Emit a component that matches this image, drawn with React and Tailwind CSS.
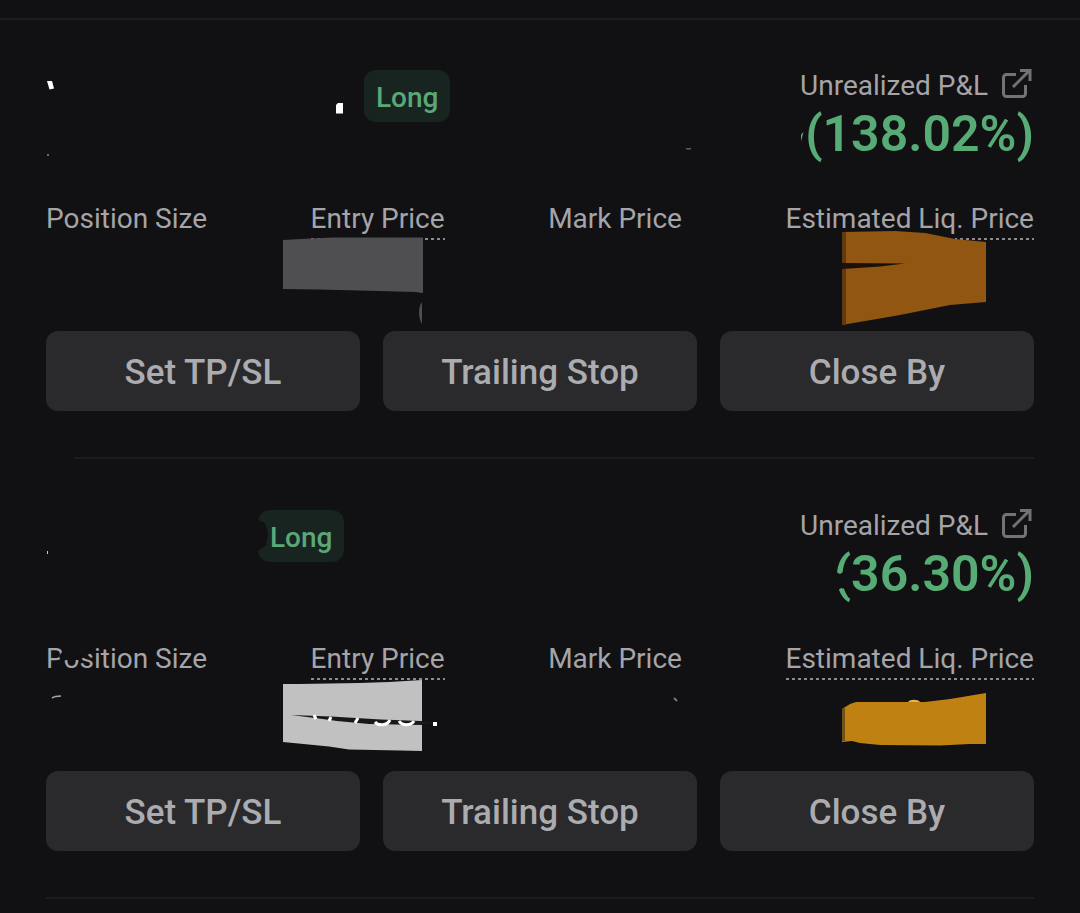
import React from 'react';

const positions = [
  { id: 'first', side: 'Long', roe: '(138.02%)' },
  { id: 'second', side: 'Long', roe: '(36.30%)' },
];

const actions = ['Set TP/SL', 'Trailing Stop', 'Close By'];

function ShareIcon() {
  return (
    <svg viewBox="0 0 30 30" className="w-[30px] h-[30px]" fill="none" stroke="#737376" strokeWidth="3" aria-hidden="true">
      <path d="M14 5.500H4.500a3 3 0 0 0-3 3v16a3 3 0 0 0 3 3h16a3 3 0 0 0 3-3V16" />
      <path d="M11 18L27 2" />
      <path d="M18 1.500H28V12" />
    </svg>
  );
}

// What is left of the contract name after it was painted out
function HiddenSymbol({ id }) {
  if (id === 'first') {
    return (
      <svg viewBox="0 0 318 90" className="w-[318px] h-[90px]" aria-hidden="true">
        <path d="M1 12h5l2 7.500-4.500 1z" fill="#fff" />
        <path d="M290 36l2-2h5v10.500h-7z" fill="#fff" />
        <path d="M1 85h2v2h-2z" fill="#66656a" />
      </svg>
    );
  }
  return (
    <svg viewBox="0 0 212 90" className="w-[212px] h-[90px]" aria-hidden="true">
      <path d="M1 42h1v3h-1z" fill="#c9c9cc" />
    </svg>
  );
}

function PnlMarks({ id }) {
  return (
    <svg viewBox="0 0 350 90" className="absolute right-0 top-0 w-[350px] h-[90px] pointer-events-none" aria-hidden="true">
      {id === 'first' ? (
        <>
          <path d="M2 79h5v1.500h-5z" fill="#5c5c60" />
          <path d="M119.500 63l-2.500 9.500v-7z" fill="#57ab74" />
        </>
      ) : (
        <path d="M150 62l6 3 5-3v18l-4-1-4 3-4-2z" fill="#111013" />
      )}
    </svg>
  );
}

function SizeMarks({ id }) {
  if (id === 'first') return null;
  return (
    <svg viewBox="0 0 100 80" className="absolute left-0 top-0 w-[100px] h-20 pointer-events-none" aria-hidden="true">
      <path d="M15 3h27l2 7-4 4-8 3H20l-5 2-2-6 3-4z" fill="#111013" />
      <path d="M6 55c3-2 5-2 9-2" fill="none" stroke="#a5a4a8" strokeWidth="1.600" />
    </svg>
  );
}

function EntryMarks({ id }) {
  return (
    <svg viewBox="0 0 160 100" className="absolute -left-7 top-[27px] w-40 h-[100px] max-w-none pointer-events-none" aria-hidden="true">
      {id === 'first' ? (
        <>
          <path d="M0 10L18 9 50 7.500H140V63l-8-1-36-1-60-1.500L0 59z" fill="#4f4f51" />
          <path d="M139 72c-4 5-4 16 0 22z" fill="#4f4f51" />
        </>
      ) : (
        <>
          <path d="M-1 14h17l30-.5 30-.5 30-1 33-2v71l-22-.5-51-1-20-3L-1 72z" fill="#c1c1c1" />
          <path d="M8 45l40 1.500 50 3 40 1.500 14 1.500-14 2.500-52-1-32-3-22-3z" fill="#18181a" />
          <g fill="none" stroke="#fff" strokeWidth="3">
            <path d="M31 45l2 4M48 47l-2 4M75 48l-3 5" />
            <path d="M92 52c3 4 12 4 15-2M116 51c3 5 12 5 15 0" />
          </g>
          <path d="M150 52h4v4h-4z" fill="#fff" />
        </>
      )}
    </svg>
  );
}

function MarkMarks({ id }) {
  if (id === 'first') return null;
  return (
    <svg viewBox="0 0 20 20" className="absolute right-0 top-12 w-5 h-5 pointer-events-none" aria-hidden="true">
      <path d="M12 7l3 3" stroke="#77777a" strokeWidth="2" />
    </svg>
  );
}

function LiqMarks({ id }) {
  return (
    <svg viewBox="0 0 250 100" className="absolute right-0 top-[27px] w-[250px] h-[100px] max-w-none pointer-events-none" aria-hidden="true">
      {id === 'first' ? (
        <>
          <path d="M0 7h171v4H0z" fill="#111013" />
          <path d="M58 2l53-1 30 2 30 6 31 3v60l-36 3-50 10-58 10z" fill="#905612" />
          <path d="M58 2h4v92l-4 1z" fill="#5e3a12" />
          <path d="M58 33l63 .5-25 3-38 2.500z" fill="#1b100b" />
        </>
      ) : (
        <>
          <path d="M58 39l8-5 6-2h69l25-3 36-6v51h-16l-30 1.500-60-.5-20-2-8-2-10 1z" fill="#c08113" />
          <path d="M58 39l3-1v33h-3z" fill="#70501a" />
          <path d="M124 32c2-3 10-3 12 0z" fill="#eab060" />
        </>
      )}
    </svg>
  );
}

function Stat({ label, dotted, children }) {
  return (
    <div className="relative">
      <dt className="leading-8">
        {label}
        {dotted && (
          <span className="block mt-[3px] h-0.5 bg-[repeating-linear-gradient(90deg,#8c8b8f_0_3px,transparent_3px_6px)]" />
        )}
      </dt>
      <dd>{children}</dd>
    </div>
  );
}

function PositionCard({ position }) {
  const { id, side, roe } = position;
  return (
    <article>
      <header className="flex justify-between h-[134px]">
        <div className="flex items-start">
          <HiddenSymbol id={id} />
          <span className="relative mt-px h-[52px] px-3 rounded-xl bg-[#18241f] text-[#5aa877] text-[28px] leading-[56px] font-medium">
            {side}
            {id === 'second' && (
              <svg viewBox="0 0 12 52" className="absolute left-0 top-0 w-3 h-[52px]" aria-hidden="true">
                <path d="M0 10l7 3 3 10-2 12-8 6z" fill="#111013" />
              </svg>
            )}
          </span>
        </div>
        <div className="relative flex flex-col items-end">
          <div className="flex items-start gap-3.5 pr-0.5">
            <span className="leading-[34px]">Unrealized P&amp;L</span>
            <button type="button" aria-label="Share position">
              <ShareIcon />
            </button>
          </div>
          <strong className="text-[50px] leading-[62px] font-semibold text-[#57ab74]">{roe}</strong>
          <PnlMarks id={id} />
        </div>
      </header>

      <dl className="flex justify-between h-32">
        <Stat label="Position Size"><SizeMarks id={id} /></Stat>
        <Stat label="Entry Price" dotted><EntryMarks id={id} /></Stat>
        <Stat label="Mark Price"><MarkMarks id={id} /></Stat>
        <Stat label="Estimated Liq. Price" dotted><LiqMarks id={id} /></Stat>
      </dl>

      <div className="grid grid-cols-3 gap-[23px]">
        {actions.map((action) => (
          <button
            key={action}
            type="button"
            className="h-20 pt-1 rounded-xl bg-[#2a292c] text-[#abacb0] text-[35px] font-medium hover:bg-[#343337]"
          >
            {action}
          </button>
        ))}
      </div>
    </article>
  );
}

export default function App() {
  return (
    <main className="min-h-screen bg-[#111013] text-[#a5a4a8] text-[28px] font-['Roboto',sans-serif] whitespace-nowrap overflow-hidden">
      <div className="h-5 border-b-2 border-[#1c1b1e]" />
      <div className="px-[46px] pt-[49px]">
        <PositionCard position={positions[0]} />
        <hr className="ml-7 mt-[46px] mb-[50px] border-t-2 border-[#1c1b1e]" />
        <PositionCard position={positions[1]} />
        <hr className="mt-[46px] border-t-2 border-[#1c1b1e]" />
      </div>
    </main>
  );
}
